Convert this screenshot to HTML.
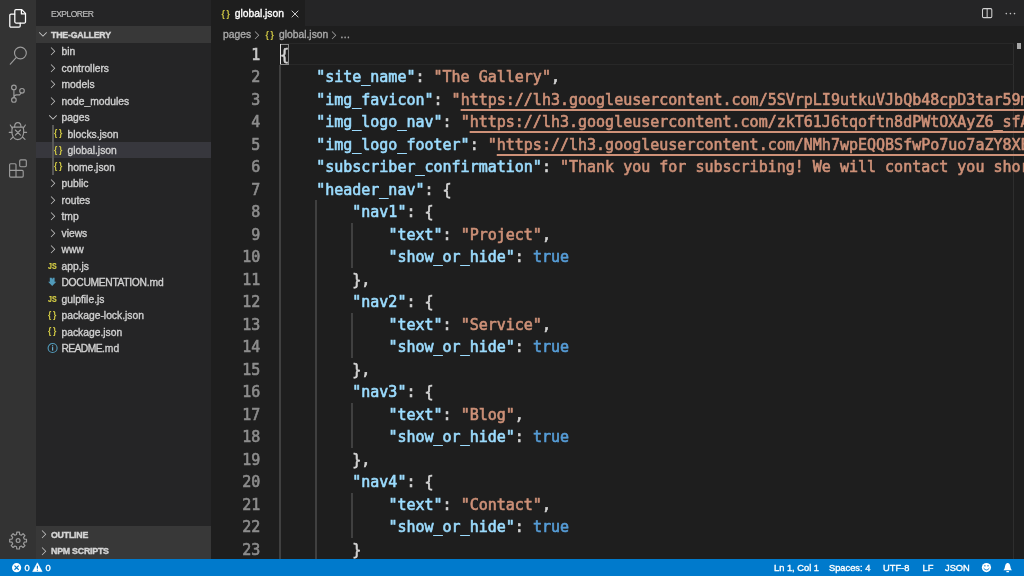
<!DOCTYPE html>
<html><head><meta charset="utf-8"><title>global.json — the-gallery</title>
<style>
*{box-sizing:border-box;margin:0;padding:0}
html,body{width:1024px;height:576px;overflow:hidden;background:#1e1e1e}
body{position:relative;font-family:"Liberation Sans",sans-serif;color:#ccc;-webkit-font-smoothing:antialiased}
.abs{position:absolute}
#act{position:absolute;left:0;top:0;width:36px;height:558.75px;background:#333}
#side{position:absolute;left:36px;top:0;width:174.75px;height:558.75px;background:#252526}
#ed{position:absolute;left:210.75px;top:0;width:813.25px;height:558.75px;background:#1e1e1e;overflow:hidden}
#tabs{position:absolute;left:0;top:0;width:100%;height:26.25px;background:#252526}
#tab{position:absolute;left:0;top:0;width:94.5px;height:26.25px;background:#1e1e1e}
#status{position:absolute;left:0;top:558.75px;width:1024px;height:17.25px;background:#007acc;color:#fff;font-size:9.3px;font-weight:normal;-webkit-text-stroke:0.35px;white-space:nowrap}
.ui{font-size:10.3px;font-weight:normal;white-space:nowrap;position:absolute;line-height:16.5px;-webkit-text-stroke:0.35px}
.hd{font-size:8.8px;font-weight:bold;letter-spacing:-0.22px;color:#d4d4d4;-webkit-text-stroke:0.4px}
.row{position:absolute;left:36px;width:174.75px;height:16.5px}
.row.sel{background:#37373d}
.row .nm{position:absolute;top:1.25px;font-size:10.3px;font-weight:normal;line-height:16.5px;color:#d0d0d0;white-space:nowrap;-webkit-text-stroke:0.35px #d0d0d0}
.chev{position:absolute;top:2.5px;width:12px;height:12px;fill:#c5c5c5}
.ficon{position:absolute;top:0;line-height:16.5px;font-size:8.5px;font-weight:bold;white-space:nowrap}
.json{color:#d4cc45}
.jsi{color:#d4cc45;font-size:9px;top:0.5px;transform:scaleX(0.78);transform-origin:0 50%;-webkit-text-stroke:0.2px}
.ficon2{position:absolute;top:3.5px;width:10px;height:10px}
.hdr{position:absolute;left:36px;width:174.75px;height:16.5px;background:#383838}
.cl{-webkit-text-stroke:0.62px}
.ln{-webkit-text-stroke:0.6px}
.ln,.cl{position:absolute;font-family:"DejaVu Sans Mono","Liberation Mono",monospace;font-size:15px;line-height:22.5px;height:22.5px;white-space:nowrap}
.ln{left:210.75px;width:49.5px;text-align:right;color:#8c8c8c}
.cl{left:280px;color:#d4d4d4}
.k{color:#9cdcfe}.s{color:#ce9178}.u{color:#ce9178;text-decoration:underline;text-underline-offset:4.4px;text-decoration-thickness:1.5px;text-decoration-skip-ink:none}.b{color:#569cd6}.p{color:#d4d4d4}
.guide{position:absolute;width:1.5px;background:#404040}
#wrap{position:absolute;left:0;top:0;width:1024px;height:576px;will-change:transform}
</style></head><body><div id="wrap">
<div id="act"></div>
<div id="side"></div>
<div id="ed"><div id="tabs"><div id="tab"></div></div></div>


<!-- activity bar icons -->
<svg class="abs" style="left:0;top:0;width:36px;height:558.75px" viewBox="0 0 36 558.75" fill="none" stroke-linecap="round" stroke-linejoin="round">
<g stroke="#ffffff" stroke-width="1.25">
<path d="M16 9.6H21.8L25.5 13.4V21.8a1.2 1.2 0 0 1-1.2 1.2H16a1.2 1.2 0 0 1-1.2-1.2V10.8a1.2 1.2 0 0 1 1.2-1.2z"/>
<path d="M21.4 9.9V13.9H25.3"/>
<path d="M14.6 14.2H11a1.2 1.2 0 0 0-1.2 1.2V25.9a1.2 1.2 0 0 0 1.2 1.2H19a1.2 1.2 0 0 0 1.2-1.2V23.2"/>
</g>
<g stroke="#9c9c9c" stroke-width="1.15">
<circle cx="20.4" cy="53" r="5.9"/><path d="M16.1 57.6L10.3 64.2"/>
<circle cx="13.9" cy="87.4" r="2.3"/><circle cx="22" cy="90.8" r="2.3"/><circle cx="13.9" cy="99.9" r="2.3"/>
<path d="M13.9 89.7V97.6M21.2 93L19.6 94.9H16.6Q14 95.2 13.9 97.4"/>
<path d="M12.4 127.1H23.2M12.4 127.1C11.5 131 11.8 134.5 13.4 137.2C15.5 140.4 20.1 140.4 22.2 137.2C23.8 134.5 24.1 131 23.2 127.1"/>
<path d="M14.6 127C14.6 124 15.8 122.6 17.8 122.6C19.8 122.6 21 124 21 127"/>
<path d="M10.3 125L12.3 128.2M25.4 125L23.3 128.2M9.2 132.3H12M23.7 132.3H26.6M10.6 139.4L13.1 137M25 139.4L22.5 137"/>
<path d="M15.3 130L20.5 135.2M20.5 130L15.3 135.2"/>
<rect x="19.7" y="159.8" width="6.6" height="6.9" rx="1.1"/>
<path d="M10.6 163.7H15a1 1 0 0 1 1 1V170.4H22.2a1 1 0 0 1 1 1V176.1a1 1 0 0 1-1 1H10.6a1 1 0 0 1-1-1V164.7a1 1 0 0 1 1-1zM9.6 170.4H16V177.1"/>
<path d="M16.54 534.50 L16.75 532.21 L19.45 532.21 L19.66 534.50 L21.31 535.18 L23.08 533.71 L24.99 535.62 L23.52 537.39 L24.20 539.04 L26.49 539.25 L26.49 541.95 L24.20 542.16 L23.52 543.81 L24.99 545.58 L23.08 547.49 L21.31 546.02 L19.66 546.70 L19.45 548.99 L16.75 548.99 L16.54 546.70 L14.89 546.02 L13.12 547.49 L11.21 545.58 L12.68 543.81 L12.00 542.16 L9.71 541.95 L9.71 539.25 L12.00 539.04 L12.68 537.39 L11.21 535.62 L13.12 533.71 L14.89 535.18Z" stroke-width="1.2"/><circle cx="18.1" cy="540.6" r="1.9" stroke-width="1.2"/>
</g>
</svg>

<!-- sidebar -->
<div class="ui" style="left:51px;top:5.5px;font-size:8.5px;color:#bbb;letter-spacing:-0.5px;-webkit-text-stroke:0.2px">EXPLORER</div>
<div class="hdr" style="top:26.25px"></div>
<svg class="chev" style="left:37.3px;top:28.4px" viewBox="0 0 16 16"><path d="M7.98 10.07l4.6-4.6.7.7-5.3 5.4-5.4-5.4.7-.7z"/></svg>
<div class="ui hd" style="left:51px;top:26.75px">THE-GALLERY</div>
<div class="row" style="top:42.75px"><svg class="chev" style="left:11.3px" viewBox="0 0 16 16"><path d="M5.7 13.7L5 13l4.6-4.6L5 3.7l.7-.7 5.3 5.4z"/></svg><span class="nm" style="left:25.5px">bin</span></div>
<div class="row" style="top:59.25px"><svg class="chev" style="left:11.3px" viewBox="0 0 16 16"><path d="M5.7 13.7L5 13l4.6-4.6L5 3.7l.7-.7 5.3 5.4z"/></svg><span class="nm" style="left:25.5px">controllers</span></div>
<div class="row" style="top:75.75px"><svg class="chev" style="left:11.3px" viewBox="0 0 16 16"><path d="M5.7 13.7L5 13l4.6-4.6L5 3.7l.7-.7 5.3 5.4z"/></svg><span class="nm" style="left:25.5px">models</span></div>
<div class="row" style="top:92.25px"><svg class="chev" style="left:11.3px" viewBox="0 0 16 16"><path d="M5.7 13.7L5 13l4.6-4.6L5 3.7l.7-.7 5.3 5.4z"/></svg><span class="nm" style="left:25.5px">node_modules</span></div>
<div class="row" style="top:108.75px"><svg class="chev" style="left:11.3px" viewBox="0 0 16 16"><path d="M7.98 10.07l4.6-4.6.7.7-5.3 5.4-5.4-5.4.7-.7z"/></svg><span class="nm" style="left:25.5px">pages</span></div>
<div class="row" style="top:125.25px"><span class="ficon json" style="left:18px">{&thinsp;}</span><span class="nm" style="left:31.5px">blocks.json</span></div>
<div class="row sel" style="top:141.75px"><span class="ficon json" style="left:18px">{&thinsp;}</span><span class="nm" style="left:31.5px">global.json</span></div>
<div class="row" style="top:158.25px"><span class="ficon json" style="left:18px">{&thinsp;}</span><span class="nm" style="left:31.5px">home.json</span></div>
<div class="row" style="top:174.75px"><svg class="chev" style="left:11.3px" viewBox="0 0 16 16"><path d="M5.7 13.7L5 13l4.6-4.6L5 3.7l.7-.7 5.3 5.4z"/></svg><span class="nm" style="left:25.5px">public</span></div>
<div class="row" style="top:191.25px"><svg class="chev" style="left:11.3px" viewBox="0 0 16 16"><path d="M5.7 13.7L5 13l4.6-4.6L5 3.7l.7-.7 5.3 5.4z"/></svg><span class="nm" style="left:25.5px">routes</span></div>
<div class="row" style="top:207.75px"><svg class="chev" style="left:11.3px" viewBox="0 0 16 16"><path d="M5.7 13.7L5 13l4.6-4.6L5 3.7l.7-.7 5.3 5.4z"/></svg><span class="nm" style="left:25.5px">tmp</span></div>
<div class="row" style="top:224.25px"><svg class="chev" style="left:11.3px" viewBox="0 0 16 16"><path d="M5.7 13.7L5 13l4.6-4.6L5 3.7l.7-.7 5.3 5.4z"/></svg><span class="nm" style="left:25.5px">views</span></div>
<div class="row" style="top:240.75px"><svg class="chev" style="left:11.3px" viewBox="0 0 16 16"><path d="M5.7 13.7L5 13l4.6-4.6L5 3.7l.7-.7 5.3 5.4z"/></svg><span class="nm" style="left:25.5px">www</span></div>
<div class="row" style="top:257.25px"><span class="ficon jsi" style="left:12px">JS</span><span class="nm" style="left:25.5px">app.js</span></div>
<div class="row" style="top:273.75px"><svg class="ficon2" style="left:11px;top:3.25px;width:11px;height:11px" viewBox="47 277 11 11"><path fill="#519aba" d="M49.8 277.8H51.7L52.2 279.5L52.7 277.8H54.6V281.7H56.3L52.2 286.1L48.1 281.7H49.8z"/></svg><span class="nm" style="left:25.5px"><span style="letter-spacing:-0.33px">DOCUMENTATION</span>.md</span></div>
<div class="row" style="top:290.25px"><span class="ficon jsi" style="left:12px">JS</span><span class="nm" style="left:25.5px">gulpfile.js</span></div>
<div class="row" style="top:306.75px"><span class="ficon json" style="left:12px">{&thinsp;}</span><span class="nm" style="left:25.5px">package-lock.json</span></div>
<div class="row" style="top:323.25px"><span class="ficon json" style="left:12px">{&thinsp;}</span><span class="nm" style="left:25.5px">package.json</span></div>
<div class="row" style="top:339.75px"><svg class="ficon2" style="left:11px;top:2.5px;width:12px;height:12px" viewBox="0 0 12 12"><circle cx="5.6" cy="6" r="4.5" fill="none" stroke="#519aba" stroke-width="1.1"/><rect x="5" y="5.1" width="1.2" height="3.5" fill="#6ab0d0"/><rect x="5" y="3.2" width="1.2" height="1.2" fill="#6ab0d0"/></svg><span class="nm" style="left:25.5px"><span style="letter-spacing:-0.6px">README</span>.md</span></div>
<div class="guide" style="left:52px;top:125.25px;height:49.5px;background:#585858"></div>
<div class="hdr" style="top:526.25px;height:32.5px"></div>
<svg class="chev" style="left:38px;top:528.4px" viewBox="0 0 16 16"><path d="M5.7 13.7L5 13l4.6-4.6L5 3.7l.7-.7 5.3 5.4z"/></svg>
<div class="ui hd" style="left:51px;top:526.75px">OUTLINE</div>
<svg class="chev" style="left:38px;top:544.7px" viewBox="0 0 16 16"><path d="M5.7 13.7L5 13l4.6-4.6L5 3.7l.7-.7 5.3 5.4z"/></svg>
<div class="ui hd" style="left:51px;top:543px">NPM SCRIPTS</div>

<!-- tab -->
<span class="ficon json" style="left:221.4px;top:5.75px">{&thinsp;}</span>
<div class="ui" style="left:234.7px;top:5.75px;color:#fff">global.json</div>
<svg class="abs" style="left:291px;top:10.25px;width:8px;height:8px" viewBox="0 0 8 8"><path d="M0.7 0.7L7.3 7.3M7.3 0.7L0.7 7.3" stroke="#ddd" stroke-width="0.9" fill="none"/></svg>


<!-- editor actions -->
<svg class="abs" style="left:976px;top:0;width:48px;height:26px" viewBox="976 0 48 26" fill="none">
<rect x="982.5" y="8.6" width="9.3" height="9" rx="1.2" stroke="#d0d0d0" stroke-width="1.05"/>
<path d="M987.15 8.6V17.6" stroke="#d0d0d0" stroke-width="1.05"/>
<circle cx="1006.3" cy="13.6" r="0.8" fill="#c5c5c5"/><circle cx="1010.4" cy="13.6" r="0.8" fill="#c5c5c5"/><circle cx="1014.5" cy="13.6" r="0.8" fill="#c5c5c5"/>
</svg>
<!-- breadcrumbs -->
<div class="ui" style="left:223px;top:26.5px;color:#a9a9a9">pages</div>
<svg class="chev" style="left:250.8px;top:29px;fill:#a0a0a0" viewBox="0 0 16 16"><path d="M5.7 13.7L5 13l4.6-4.6L5 3.7l.7-.7 5.3 5.4z"/></svg>
<span class="ficon json" style="left:265.6px;top:26.5px">{&thinsp;}</span>
<div class="ui" style="left:279px;top:26.5px;color:#a9a9a9">global.json</div>
<svg class="chev" style="left:327.5px;top:29px;fill:#a0a0a0" viewBox="0 0 16 16"><path d="M5.7 13.7L5 13l4.6-4.6L5 3.7l.7-.7 5.3 5.4z"/></svg>
<div class="ui" style="left:340px;top:26.5px;color:#a9a9a9;letter-spacing:-0.6px">…</div>

<!-- editor -->
<div class="abs" style="left:1013.3px;top:42.75px;width:1px;height:516px;background:#2e2e2e"></div>
<div class="abs" style="left:280px;top:42.75px;width:734px;height:22.5px;border-top:1.5px solid #282828;border-bottom:1.5px solid #282828"></div>
<div class="guide" style="left:279.4px;top:65.25px;height:493.5px"></div>
<div class="guide" style="left:315.4px;top:200.25px;height:358.5px"></div>
<div class="guide" style="left:351.4px;top:222.75px;height:45px"></div>
<div class="guide" style="left:351.4px;top:312.75px;height:45px"></div>
<div class="guide" style="left:351.4px;top:402.75px;height:45px"></div>
<div class="guide" style="left:351.4px;top:492.75px;height:45px"></div>
<div class="ln" style="top:43.50px;color:#c6c6c6">1</div><div class="cl" style="top:43.50px"><span class="p">{</span></div>
<div class="ln" style="top:66.00px">2</div><div class="cl" style="top:66.00px">&nbsp;&nbsp;&nbsp;&nbsp;<span class="k">"site_name"</span><span class="p">:&nbsp;</span><span class="s">"The&nbsp;Gallery"</span><span class="p">,</span></div>
<div class="ln" style="top:88.50px">3</div><div class="cl" style="top:88.50px">&nbsp;&nbsp;&nbsp;&nbsp;<span class="k">"img_favicon"</span><span class="p">:&nbsp;</span><span class="s">"</span><span class="u">https://lh3.googleusercontent.com/5SVrpLI9utkuVJbQb48cpD3tar59mXyZ</span></div>
<div class="ln" style="top:111.00px">4</div><div class="cl" style="top:111.00px">&nbsp;&nbsp;&nbsp;&nbsp;<span class="k">"img_logo_nav"</span><span class="p">:&nbsp;</span><span class="s">"</span><span class="u">https://lh3.googleusercontent.com/zkT61J6tqoftn8dPWtOXAyZ6_sfAbCd</span></div>
<div class="ln" style="top:133.50px">5</div><div class="cl" style="top:133.50px">&nbsp;&nbsp;&nbsp;&nbsp;<span class="k">"img_logo_footer"</span><span class="p">:&nbsp;</span><span class="s">"</span><span class="u">https://lh3.googleusercontent.com/NMh7wpEQQBSfwPo7uo7aZY8XEabc</span></div>
<div class="ln" style="top:156.00px">6</div><div class="cl" style="top:156.00px">&nbsp;&nbsp;&nbsp;&nbsp;<span class="k">"subscriber_confirmation"</span><span class="p">:&nbsp;</span><span class="s">"Thank&nbsp;you&nbsp;for&nbsp;subscribing!&nbsp;We&nbsp;will&nbsp;contact&nbsp;you&nbsp;shortly</span></div>
<div class="ln" style="top:178.50px">7</div><div class="cl" style="top:178.50px">&nbsp;&nbsp;&nbsp;&nbsp;<span class="k">"header_nav"</span><span class="p">:&nbsp;{</span></div>
<div class="ln" style="top:201.00px">8</div><div class="cl" style="top:201.00px">&nbsp;&nbsp;&nbsp;&nbsp;&nbsp;&nbsp;&nbsp;&nbsp;<span class="k">"nav1"</span><span class="p">:&nbsp;{</span></div>
<div class="ln" style="top:223.50px">9</div><div class="cl" style="top:223.50px">&nbsp;&nbsp;&nbsp;&nbsp;&nbsp;&nbsp;&nbsp;&nbsp;&nbsp;&nbsp;&nbsp;&nbsp;<span class="k">"text"</span><span class="p">:&nbsp;</span><span class="s">"Project"</span><span class="p">,</span></div>
<div class="ln" style="top:246.00px">10</div><div class="cl" style="top:246.00px">&nbsp;&nbsp;&nbsp;&nbsp;&nbsp;&nbsp;&nbsp;&nbsp;&nbsp;&nbsp;&nbsp;&nbsp;<span class="k">"show_or_hide"</span><span class="p">:&nbsp;</span><span class="b">true</span></div>
<div class="ln" style="top:268.50px">11</div><div class="cl" style="top:268.50px">&nbsp;&nbsp;&nbsp;&nbsp;&nbsp;&nbsp;&nbsp;&nbsp;<span class="p">},</span></div>
<div class="ln" style="top:291.00px">12</div><div class="cl" style="top:291.00px">&nbsp;&nbsp;&nbsp;&nbsp;&nbsp;&nbsp;&nbsp;&nbsp;<span class="k">"nav2"</span><span class="p">:&nbsp;{</span></div>
<div class="ln" style="top:313.50px">13</div><div class="cl" style="top:313.50px">&nbsp;&nbsp;&nbsp;&nbsp;&nbsp;&nbsp;&nbsp;&nbsp;&nbsp;&nbsp;&nbsp;&nbsp;<span class="k">"text"</span><span class="p">:&nbsp;</span><span class="s">"Service"</span><span class="p">,</span></div>
<div class="ln" style="top:336.00px">14</div><div class="cl" style="top:336.00px">&nbsp;&nbsp;&nbsp;&nbsp;&nbsp;&nbsp;&nbsp;&nbsp;&nbsp;&nbsp;&nbsp;&nbsp;<span class="k">"show_or_hide"</span><span class="p">:&nbsp;</span><span class="b">true</span></div>
<div class="ln" style="top:358.50px">15</div><div class="cl" style="top:358.50px">&nbsp;&nbsp;&nbsp;&nbsp;&nbsp;&nbsp;&nbsp;&nbsp;<span class="p">},</span></div>
<div class="ln" style="top:381.00px">16</div><div class="cl" style="top:381.00px">&nbsp;&nbsp;&nbsp;&nbsp;&nbsp;&nbsp;&nbsp;&nbsp;<span class="k">"nav3"</span><span class="p">:&nbsp;{</span></div>
<div class="ln" style="top:403.50px">17</div><div class="cl" style="top:403.50px">&nbsp;&nbsp;&nbsp;&nbsp;&nbsp;&nbsp;&nbsp;&nbsp;&nbsp;&nbsp;&nbsp;&nbsp;<span class="k">"text"</span><span class="p">:&nbsp;</span><span class="s">"Blog"</span><span class="p">,</span></div>
<div class="ln" style="top:426.00px">18</div><div class="cl" style="top:426.00px">&nbsp;&nbsp;&nbsp;&nbsp;&nbsp;&nbsp;&nbsp;&nbsp;&nbsp;&nbsp;&nbsp;&nbsp;<span class="k">"show_or_hide"</span><span class="p">:&nbsp;</span><span class="b">true</span></div>
<div class="ln" style="top:448.50px">19</div><div class="cl" style="top:448.50px">&nbsp;&nbsp;&nbsp;&nbsp;&nbsp;&nbsp;&nbsp;&nbsp;<span class="p">},</span></div>
<div class="ln" style="top:471.00px">20</div><div class="cl" style="top:471.00px">&nbsp;&nbsp;&nbsp;&nbsp;&nbsp;&nbsp;&nbsp;&nbsp;<span class="k">"nav4"</span><span class="p">:&nbsp;{</span></div>
<div class="ln" style="top:493.50px">21</div><div class="cl" style="top:493.50px">&nbsp;&nbsp;&nbsp;&nbsp;&nbsp;&nbsp;&nbsp;&nbsp;&nbsp;&nbsp;&nbsp;&nbsp;<span class="k">"text"</span><span class="p">:&nbsp;</span><span class="s">"Contact"</span><span class="p">,</span></div>
<div class="ln" style="top:516.00px">22</div><div class="cl" style="top:516.00px">&nbsp;&nbsp;&nbsp;&nbsp;&nbsp;&nbsp;&nbsp;&nbsp;&nbsp;&nbsp;&nbsp;&nbsp;<span class="k">"show_or_hide"</span><span class="p">:&nbsp;</span><span class="b">true</span></div>
<div class="ln" style="top:538.50px">23</div><div class="cl" style="top:538.50px">&nbsp;&nbsp;&nbsp;&nbsp;&nbsp;&nbsp;&nbsp;&nbsp;<span class="p">}</span></div>
<div class="abs" style="left:279.5px;top:43.5px;width:9.7px;height:21px;border:1px solid #888"></div>
<div class="abs" style="left:279.75px;top:44.25px;width:1.5px;height:20px;background:#e0e0e0"></div>

<div class="abs" style="left:1017px;top:43px;width:4px;height:5.6px;background:#a8a8a8"></div>

<!-- status -->
<div id="status">
<svg class="abs" style="left:0;top:0;width:1024px;height:17.25px" viewBox="0 558.75 1024 17.25">
<circle cx="16.6" cy="567.4" r="4.6" fill="#fff"/>
<path d="M14.5 565.3L18.7 569.5M18.7 565.3L14.5 569.5" stroke="#007acc" stroke-width="1.1" fill="none"/>
<path d="M37.4 562.6L42.1 571.3H32.7z" fill="#fff" stroke="#fff" stroke-width="0.6" stroke-linejoin="round"/>
<path d="M37.4 565.5V568.6M37.4 569.6V570.5" stroke="#007acc" stroke-width="1.1" fill="none"/>
<circle cx="986.45" cy="567.3" r="4.6" fill="#fff"/>
<path d="M984 565.6H985.7M987.2 565.6H988.9" stroke="#007acc" stroke-width="0.9" fill="none"/>
<path d="M983.6 567.9Q986.45 571.6 989.3 567.9" stroke="#007acc" stroke-width="0.9" fill="none"/>
<path d="M1003.4 569.9C1005.2 568.6 1004.6 565.8 1005.6 564.2C1006.6 562.2 1008.8 562.2 1009.8 564.2C1010.8 565.8 1010.2 568.6 1012 569.9z" fill="#fff"/>
<rect x="1006.3" y="570.7" width="2.8" height="1.3" rx="0.6" fill="#fff"/>
</svg>

<div class="abs" style="left:24.5px;top:0;line-height:18.25px">0</div>
<div class="abs" style="left:45.5px;top:0;line-height:18.25px">0</div>
<div class="abs" style="left:774px;top:0;line-height:18.25px">Ln 1, Col 1</div>
<div class="abs" style="left:829px;top:0;line-height:18.25px">Spaces: 4</div>
<div class="abs" style="left:883px;top:0;line-height:18.25px">UTF-8</div>
<div class="abs" style="left:922.5px;top:0;line-height:18.25px">LF</div>
<div class="abs" style="left:945px;top:0;line-height:18.25px">JSON</div>
</div>
</div></body></html>
